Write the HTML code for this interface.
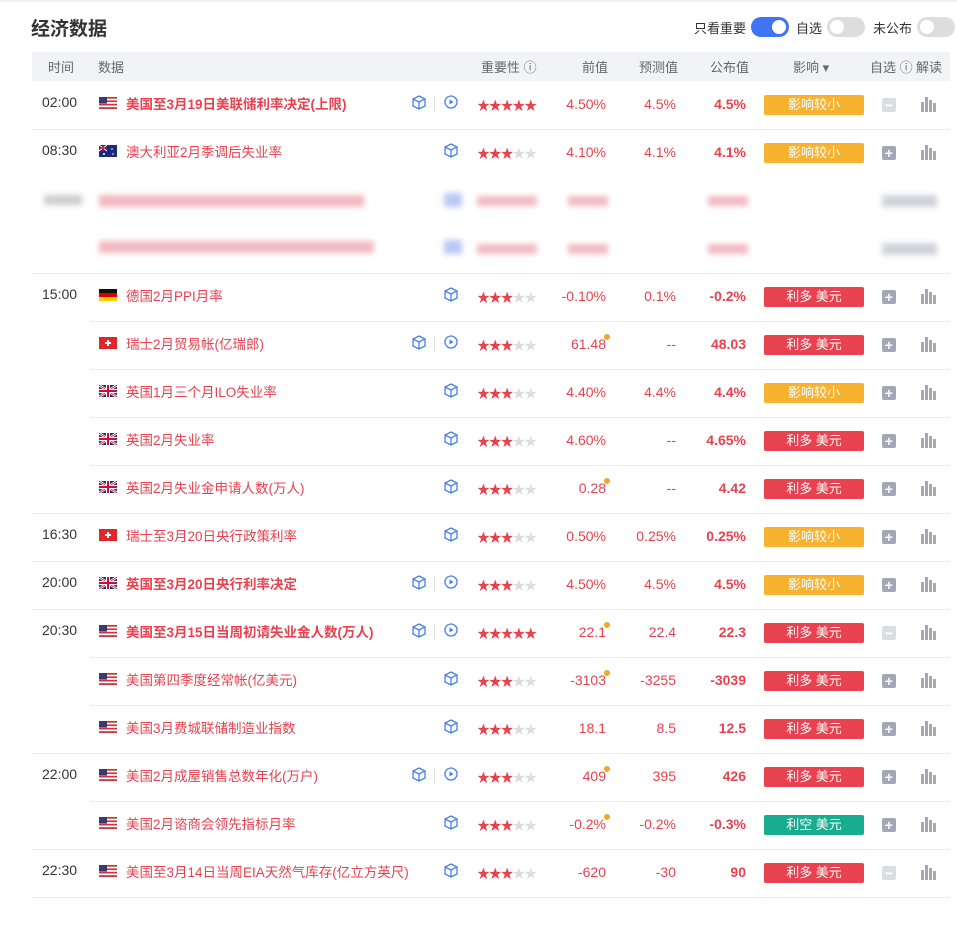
<!DOCTYPE html>
<html><head><meta charset="utf-8"><style>
*{margin:0;padding:0;box-sizing:border-box}
body{width:957px;height:928px;background:#fff;font-family:"Liberation Sans","Noto Sans CJK SC",sans-serif;position:relative;overflow:hidden;color:#333}
.top{position:absolute;left:0;top:0;width:957px;height:2px;background:#eef0f4}
h1{position:absolute;left:31px;top:14px;font-size:19px;font-weight:bold;color:#333}
.tg{position:absolute;top:17px;font-size:13px;color:#333;display:flex;align-items:center}
.sw{width:38px;height:20px;border-radius:10px;background:#ddd;position:relative;margin-left:5px}
.sw:after{content:"";position:absolute;top:3px;left:3px;width:14px;height:14px;border-radius:50%;background:#fff}
.sw.on{background:#4173f5}.sw.on:after{left:21px}
.hd{position:absolute;left:32px;top:52px;width:918px;height:29px;background:#f2f3f7;font-size:13px;color:#666}
.hd span{position:absolute;top:5px}
.r{position:absolute;left:0;width:957px;height:48px}
.ln{position:absolute;height:1px;background:#e8e9ed}
.t{position:absolute;left:42px;top:13px;font-size:14px;color:#333}
.fl{position:absolute;left:99px;top:16px;width:18px;height:12px;overflow:hidden}
.n{position:absolute;left:126px;top:12px;font-size:13.5px;color:#e8414f}
.n.b{font-weight:bold}
.cube{position:absolute;top:14px}
.play{position:absolute;left:444px;top:14px}
.sep{position:absolute;left:434px;top:16px;width:1px;height:14px;background:#ddd}
.st{position:absolute;left:477px;top:14px;font-size:13px;letter-spacing:-1.2px;color:#e8414f}
.st i{font-style:normal;color:#ddd}
.v{position:absolute;top:15px;font-size:14px;color:#e8414f;text-align:right;width:80px}
.v1{left:526px}.v2{left:596px}.v3{left:666px;font-weight:bold}
.dot{position:absolute;width:6px;height:6px;border-radius:50%;background:#f5a623;left:604px;top:13px}
.bd{position:absolute;left:764px;top:14px;width:100px;height:20px;color:#fff;font-size:13px;text-align:center;line-height:20px;border-radius:2px}
.o{background:#f7b22f}.rd{background:#e8414f}.g{background:#16ae8e}
.ck{position:absolute;left:882px;top:17px;width:14px;height:14px;border-radius:2px;background:#a4a7b6;color:#fff;font-size:14px;line-height:14px;text-align:center;font-weight:bold}
.ck.d{background:#dcdde1}
.ch{position:absolute;left:921px;top:15px}
.bl{position:absolute;filter:blur(3px);background:#f2b8c0}
</style></head><body>
<div class="top"></div>
<h1>经济数据</h1>
<div class="tg" style="left:694px">只看重要<div class="sw on"></div></div>
<div class="tg" style="left:796px">自选<div class="sw"></div></div>
<div class="tg" style="left:873px">未公布<div class="sw"></div></div>
<div class="hd"><span style="left:16px">时间</span><span style="left:66px">数据</span><span style="left:449px">重要性 ⓘ</span><span style="left:550px">前值</span><span style="left:607px">预测值</span><span style="left:678px">公布值</span><span style="left:761px">影响 ▾</span><span style="left:838px">自选 ⓘ</span><span style="left:884px">解读</span></div>

<svg width="0" height="0" style="position:absolute"><defs>
<g id="cb"><path d="M7 1 L13 4 L13 11 L7 14 L1 11 L1 4 Z M1 4 L7 7 L13 4 M7 7 L7 14" fill="none" stroke="#4a7cf0" stroke-width="1.3"/></g>
<g id="pl"><circle cx="7" cy="7" r="6" fill="none" stroke="#4a7cf0" stroke-width="1.3"/><path d="M5.5 4.5 L9.5 7 L5.5 9.5Z" fill="#4a7cf0"/></g>
<g id="chart"><rect x="0" y="6" width="3" height="10" fill="#a4a7b6"/><rect x="4" y="1" width="3" height="15" fill="#a4a7b6"/><rect x="8" y="4" width="3" height="12" fill="#a4a7b6"/><rect x="12" y="7" width="3" height="9" fill="#a4a7b6"/></g>
<g id="us"><rect width="18" height="12" fill="#fff"/><rect y="0" width="18" height="1.7" fill="#c9353f"/><rect y="3.4" width="18" height="1.7" fill="#c9353f"/><rect y="6.8" width="18" height="1.7" fill="#c9353f"/><rect y="10.2" width="18" height="1.8" fill="#c9353f"/><rect width="8" height="6.5" fill="#3c3b6e"/></g>
<g id="uk"><rect width="18" height="12" fill="#22307a"/><path d="M0 0L18 12M18 0L0 12" stroke="#fff" stroke-width="2.5"/><path d="M0 0L18 12M18 0L0 12" stroke="#c8102e" stroke-width="0.8"/><path d="M9 0V12M0 6H18" stroke="#fff" stroke-width="4"/><path d="M9 0V12M0 6H18" stroke="#c8102e" stroke-width="2"/></g>
<g id="ch"><rect width="18" height="12" fill="#e0262b"/><path d="M9 3V9M6 6H12" stroke="#fff" stroke-width="2"/></g>
<g id="de"><rect width="18" height="4" fill="#111"/><rect y="4" width="18" height="4" fill="#dd0000"/><rect y="8" width="18" height="4" fill="#ffce00"/></g>
<g id="au"><rect width="18" height="12" fill="#1d2a7a"/><path d="M0 0L8 6M8 0L0 6" stroke="#fff" stroke-width="1"/><path d="M4 0V6M0 3H8" stroke="#c8102e" stroke-width="1.3"/><circle cx="13" cy="4" r=".8" fill="#fff"/><circle cx="14" cy="9" r=".8" fill="#fff"/><circle cx="5" cy="9" r="1" fill="#fff"/></g>
</defs></svg>

<div class="ln" style="left:32px;width:918px;top:129px"></div>
<div class="ln" style="left:32px;width:918px;top:273px"></div>
<div class="ln" style="left:90px;width:860px;top:321px"></div>
<div class="ln" style="left:90px;width:860px;top:369px"></div>
<div class="ln" style="left:90px;width:860px;top:417px"></div>
<div class="ln" style="left:90px;width:860px;top:465px"></div>
<div class="ln" style="left:32px;width:918px;top:513px"></div>
<div class="ln" style="left:32px;width:918px;top:561px"></div>
<div class="ln" style="left:32px;width:918px;top:609px"></div>
<div class="ln" style="left:90px;width:860px;top:657px"></div>
<div class="ln" style="left:90px;width:860px;top:705px"></div>
<div class="ln" style="left:32px;width:918px;top:753px"></div>
<div class="ln" style="left:90px;width:860px;top:801px"></div>
<div class="ln" style="left:32px;width:918px;top:849px"></div>
<div class="ln" style="left:32px;width:918px;top:897px"></div>

<div class="r" style="top:81px"><div class="t">02:00</div><svg class="fl"><use href="#us"/></svg><div class="n b">美国至3月19日美联储利率决定(上限)</div><svg class="cube" style="left:412px" width="14" height="15"><use href="#cb"/></svg><div class="sep"></div><svg class="play" width="14" height="14"><use href="#pl"/></svg><div class="st">★★★★★</div><div class="v v1">4.50%</div><div class="v v2">4.5%</div><div class="v v3">4.5%</div><div class="bd o">影响较小</div><div class="ck d">−</div><svg class="ch" width="15" height="16"><use href="#chart"/></svg></div>

<div class="r" style="top:129px"><div class="t">08:30</div><svg class="fl"><use href="#au"/></svg><div class="n">澳大利亚2月季调后失业率</div><svg class="cube" style="left:444px" width="14" height="15"><use href="#cb"/></svg><div class="st">★★★<i>★★</i></div><div class="v v1">4.10%</div><div class="v v2">4.1%</div><div class="v v3">4.1%</div><div class="bd o">影响较小</div><div class="ck">+</div><svg class="ch" width="15" height="16"><use href="#chart"/></svg></div>

<div class="bl" style="left:44px;top:195px;width:38px;height:10px;background:#ccc"></div>
<div class="bl" style="left:99px;top:195px;width:265px;height:12px"></div>
<div class="bl" style="left:444px;top:193px;width:18px;height:14px;background:#b8c8f5"></div>
<div class="bl" style="left:477px;top:196px;width:60px;height:10px"></div>
<div class="bl" style="left:568px;top:196px;width:40px;height:10px"></div>
<div class="bl" style="left:708px;top:196px;width:40px;height:10px"></div>
<div class="bl" style="left:882px;top:195px;width:55px;height:12px;background:#d0d2da"></div>
<div class="bl" style="left:99px;top:241px;width:275px;height:12px"></div>
<div class="bl" style="left:444px;top:240px;width:18px;height:14px;background:#b8c8f5"></div>
<div class="bl" style="left:477px;top:244px;width:60px;height:10px"></div>
<div class="bl" style="left:568px;top:244px;width:40px;height:10px"></div>
<div class="bl" style="left:708px;top:244px;width:40px;height:10px"></div>
<div class="bl" style="left:882px;top:243px;width:55px;height:12px;background:#d0d2da"></div>

<div class="r" style="top:273px"><div class="t">15:00</div><svg class="fl"><use href="#de"/></svg><div class="n">德国2月PPI月率</div><svg class="cube" style="left:444px" width="14" height="15"><use href="#cb"/></svg><div class="st">★★★<i>★★</i></div><div class="v v1">-0.10%</div><div class="v v2">0.1%</div><div class="v v3">-0.2%</div><div class="bd rd">利多 美元</div><div class="ck">+</div><svg class="ch" width="15" height="16"><use href="#chart"/></svg></div>

<div class="r" style="top:321px"><svg class="fl"><use href="#ch"/></svg><div class="n">瑞士2月贸易帐(亿瑞郎)</div><svg class="cube" style="left:412px" width="14" height="15"><use href="#cb"/></svg><div class="sep"></div><svg class="play" width="14" height="14"><use href="#pl"/></svg><div class="st">★★★<i>★★</i></div><div class="v v1">61.48</div><div class="dot"></div><div class="v v2">--</div><div class="v v3">48.03</div><div class="bd rd">利多 美元</div><div class="ck">+</div><svg class="ch" width="15" height="16"><use href="#chart"/></svg></div>

<div class="r" style="top:369px"><svg class="fl"><use href="#uk"/></svg><div class="n">英国1月三个月ILO失业率</div><svg class="cube" style="left:444px" width="14" height="15"><use href="#cb"/></svg><div class="st">★★★<i>★★</i></div><div class="v v1">4.40%</div><div class="v v2">4.4%</div><div class="v v3">4.4%</div><div class="bd o">影响较小</div><div class="ck">+</div><svg class="ch" width="15" height="16"><use href="#chart"/></svg></div>

<div class="r" style="top:417px"><svg class="fl"><use href="#uk"/></svg><div class="n">英国2月失业率</div><svg class="cube" style="left:444px" width="14" height="15"><use href="#cb"/></svg><div class="st">★★★<i>★★</i></div><div class="v v1">4.60%</div><div class="v v2">--</div><div class="v v3">4.65%</div><div class="bd rd">利多 美元</div><div class="ck">+</div><svg class="ch" width="15" height="16"><use href="#chart"/></svg></div>

<div class="r" style="top:465px"><svg class="fl"><use href="#uk"/></svg><div class="n">英国2月失业金申请人数(万人)</div><svg class="cube" style="left:444px" width="14" height="15"><use href="#cb"/></svg><div class="st">★★★<i>★★</i></div><div class="v v1">0.28</div><div class="dot"></div><div class="v v2">--</div><div class="v v3">4.42</div><div class="bd rd">利多 美元</div><div class="ck">+</div><svg class="ch" width="15" height="16"><use href="#chart"/></svg></div>

<div class="r" style="top:513px"><div class="t">16:30</div><svg class="fl"><use href="#ch"/></svg><div class="n">瑞士至3月20日央行政策利率</div><svg class="cube" style="left:444px" width="14" height="15"><use href="#cb"/></svg><div class="st">★★★<i>★★</i></div><div class="v v1">0.50%</div><div class="v v2">0.25%</div><div class="v v3">0.25%</div><div class="bd o">影响较小</div><div class="ck">+</div><svg class="ch" width="15" height="16"><use href="#chart"/></svg></div>

<div class="r" style="top:561px"><div class="t">20:00</div><svg class="fl"><use href="#uk"/></svg><div class="n b">英国至3月20日央行利率决定</div><svg class="cube" style="left:412px" width="14" height="15"><use href="#cb"/></svg><div class="sep"></div><svg class="play" width="14" height="14"><use href="#pl"/></svg><div class="st">★★★<i>★★</i></div><div class="v v1">4.50%</div><div class="v v2">4.5%</div><div class="v v3">4.5%</div><div class="bd o">影响较小</div><div class="ck">+</div><svg class="ch" width="15" height="16"><use href="#chart"/></svg></div>

<div class="r" style="top:609px"><div class="t">20:30</div><svg class="fl"><use href="#us"/></svg><div class="n b">美国至3月15日当周初请失业金人数(万人)</div><svg class="cube" style="left:412px" width="14" height="15"><use href="#cb"/></svg><div class="sep"></div><svg class="play" width="14" height="14"><use href="#pl"/></svg><div class="st">★★★★★</div><div class="v v1">22.1</div><div class="dot"></div><div class="v v2">22.4</div><div class="v v3">22.3</div><div class="bd rd">利多 美元</div><div class="ck d">−</div><svg class="ch" width="15" height="16"><use href="#chart"/></svg></div>

<div class="r" style="top:657px"><svg class="fl"><use href="#us"/></svg><div class="n">美国第四季度经常帐(亿美元)</div><svg class="cube" style="left:444px" width="14" height="15"><use href="#cb"/></svg><div class="st">★★★<i>★★</i></div><div class="v v1">-3103</div><div class="dot"></div><div class="v v2">-3255</div><div class="v v3">-3039</div><div class="bd rd">利多 美元</div><div class="ck">+</div><svg class="ch" width="15" height="16"><use href="#chart"/></svg></div>

<div class="r" style="top:705px"><svg class="fl"><use href="#us"/></svg><div class="n">美国3月费城联储制造业指数</div><svg class="cube" style="left:444px" width="14" height="15"><use href="#cb"/></svg><div class="st">★★★<i>★★</i></div><div class="v v1">18.1</div><div class="v v2">8.5</div><div class="v v3">12.5</div><div class="bd rd">利多 美元</div><div class="ck">+</div><svg class="ch" width="15" height="16"><use href="#chart"/></svg></div>

<div class="r" style="top:753px"><div class="t">22:00</div><svg class="fl"><use href="#us"/></svg><div class="n">美国2月成屋销售总数年化(万户)</div><svg class="cube" style="left:412px" width="14" height="15"><use href="#cb"/></svg><div class="sep"></div><svg class="play" width="14" height="14"><use href="#pl"/></svg><div class="st">★★★<i>★★</i></div><div class="v v1">409</div><div class="dot"></div><div class="v v2">395</div><div class="v v3">426</div><div class="bd rd">利多 美元</div><div class="ck">+</div><svg class="ch" width="15" height="16"><use href="#chart"/></svg></div>

<div class="r" style="top:801px"><svg class="fl"><use href="#us"/></svg><div class="n">美国2月谘商会领先指标月率</div><svg class="cube" style="left:444px" width="14" height="15"><use href="#cb"/></svg><div class="st">★★★<i>★★</i></div><div class="v v1">-0.2%</div><div class="dot"></div><div class="v v2">-0.2%</div><div class="v v3">-0.3%</div><div class="bd g">利空 美元</div><div class="ck">+</div><svg class="ch" width="15" height="16"><use href="#chart"/></svg></div>

<div class="r" style="top:849px"><div class="t">22:30</div><svg class="fl"><use href="#us"/></svg><div class="n">美国至3月14日当周EIA天然气库存(亿立方英尺)</div><svg class="cube" style="left:444px" width="14" height="15"><use href="#cb"/></svg><div class="st">★★★<i>★★</i></div><div class="v v1">-620</div><div class="v v2">-30</div><div class="v v3">90</div><div class="bd rd">利多 美元</div><div class="ck d">−</div><svg class="ch" width="15" height="16"><use href="#chart"/></svg></div>
</body></html>
